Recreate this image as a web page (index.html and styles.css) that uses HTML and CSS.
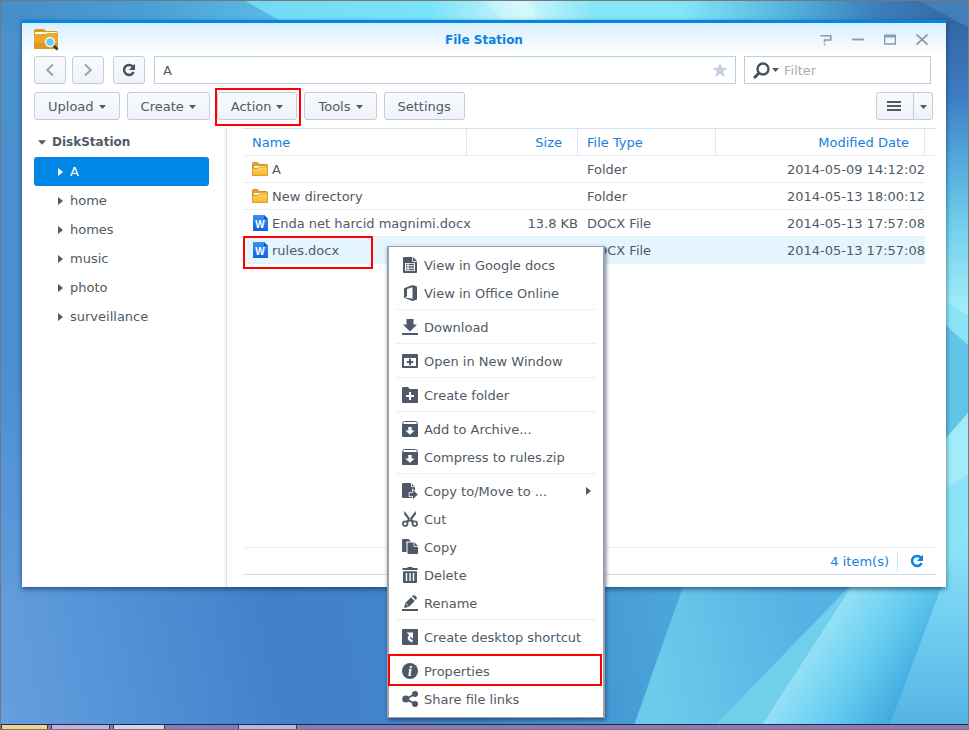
FILE: index.html
```html
<!DOCTYPE html>
<html lang="en">
<head>
<meta charset="utf-8">
<title>File Station</title>
<link rel="stylesheet" href="styles.css">
</head>
<body>
<svg class="defs" width="0" height="0" aria-hidden="true">
  <defs>
    <linearGradient id="gFolder" x1="0" y1="0" x2="0" y2="1"><stop offset="0" stop-color="#ffd766"/><stop offset="1" stop-color="#f5b52c"/></linearGradient>
    <linearGradient id="gWord" x1="0" y1="0" x2="0" y2="1"><stop offset="0" stop-color="#3a92f2"/><stop offset="1" stop-color="#1763d6"/></linearGradient>
  </defs>
  <symbol id="caret" viewBox="0 0 7 4"><path d="M0 0h7L3.500 4z" fill="currentColor"/></symbol>
  <symbol id="arrow" viewBox="0 0 5 8"><path d="M0 0v8L5 4z" fill="currentColor"/></symbol>
  <symbol id="reload" viewBox="0 0 14 14"><path d="M10.800 3.600A5 5 0 1 0 11.600 9" fill="none" stroke="currentColor" stroke-width="2.500"/><path d="M13 .8V7H6.800z" fill="currentColor"/></symbol>
  <symbol id="folder" viewBox="0 0 16 16"><path d="M.5 14V2.500q0-1 1-1h4l1.500 2h7.500q1 0 1 1V14z" fill="#e2a42c" stroke="#cf902a"/><path d="M2 5h12v3H2z" fill="#fff2c4"/><path d="M.5 14.500V7.500h5.500l1.500-1.500h8v8.500z" fill="url(#gFolder)" stroke="#dc9f2c"/></symbol>
</svg>

<div class="desktop">
  <svg class="wallpaper" viewBox="0 0 969 730" preserveAspectRatio="none" aria-hidden="true">
    <defs>
      <linearGradient id="wBase" gradientUnits="userSpaceOnUse" x1="0" y1="730" x2="690" y2="600"><stop offset="0" stop-color="#669edf"/><stop offset=".16" stop-color="#5594d7"/><stop offset=".42" stop-color="#427fca"/><stop offset=".7" stop-color="#4189cc"/><stop offset="1" stop-color="#4ca8dc"/></linearGradient>
      <linearGradient id="wLeft" x1="0" y1="0" x2="0" y2="1"><stop offset="0" stop-color="#4a92cd"/><stop offset=".6" stop-color="#4a8ed4"/><stop offset="1" stop-color="#5f9adb"/></linearGradient>
      <linearGradient id="wTop" gradientUnits="userSpaceOnUse" x1="0" y1="0" x2="969" y2="0"><stop offset="0" stop-color="#468dcc"/><stop offset=".15" stop-color="#4a9fd4"/><stop offset=".3" stop-color="#5dbfe7"/></linearGradient>
      <linearGradient id="wSky" gradientUnits="userSpaceOnUse" x1="250" y1="0" x2="969" y2="20"><stop offset="0" stop-color="#74d9f2"/><stop offset=".25" stop-color="#79e3f9"/><stop offset=".38" stop-color="#cdf7fd"/><stop offset=".48" stop-color="#84e5f7"/><stop offset=".6" stop-color="#83e6f7"/><stop offset=".75" stop-color="#53b3dc"/><stop offset=".87" stop-color="#3b7fbd"/><stop offset="1" stop-color="#3265a0"/></linearGradient>
      <linearGradient id="wRight" x1="0" y1="0" x2="0" y2="1"><stop offset="0" stop-color="#3366a4"/><stop offset=".25" stop-color="#3e7dc3"/><stop offset=".45" stop-color="#50a7da"/><stop offset=".7" stop-color="#74d2ed"/><stop offset="1" stop-color="#a8f0fa"/></linearGradient>
      <linearGradient id="wCyan" gradientUnits="userSpaceOnUse" x1="650" y1="650" x2="800" y2="620"><stop offset="0" stop-color="#6ccbea"/><stop offset="1" stop-color="#54b3e4"/></linearGradient>
      <linearGradient id="wBeam" gradientUnits="userSpaceOnUse" x1="800" y1="640" x2="905" y2="710"><stop offset="0" stop-color="#a3e6f7"/><stop offset=".5" stop-color="#6acff1"/><stop offset="1" stop-color="#3da7df"/></linearGradient>
      <linearGradient id="wEdge" x1="0" y1="0" x2="0" y2="1"><stop offset="0" stop-color="#8fe8fb"/><stop offset="1" stop-color="#53b2e5"/></linearGradient>
    </defs>
    <rect width="969" height="730" fill="url(#wBase)"/>
    <rect width="24" height="588" fill="url(#wLeft)"/>
    <rect width="400" height="30" fill="url(#wTop)"/>
    <path d="M245 0H969V40H315z" fill="url(#wSky)"/>
    <path d="M485 0H530L545 40H520z" fill="#fff" opacity=".2"/>
    <rect x="930" y="20" width="39" height="300" fill="url(#wRight)"/>
    <path d="M920 0H969V26z" fill="#417fba"/>
    <path d="M930 290l39 25v415H930z" fill="#8be4f5"/>
    <path d="M930 310l39 35v75l-39 45z" fill="#62c4e8"/>
    <path d="M930 458l39-45v62l-39 25z" fill="#a2ebf8"/>
    <path d="M686 580H857L716 730H633z" fill="url(#wCyan)"/>
    <path d="M857 580L712 730H764z" fill="#70d0ec"/>
    <path d="M857 580H946L969 523V730H760z" fill="url(#wBeam)"/>
    <path d="M969 523V730H889L945 580z" fill="url(#wEdge)"/>
  </svg>

  <main class="window">
    <header class="titlebar">
      <svg class="app-icon" viewBox="0 0 25 22" aria-hidden="true"><path d="M0 2q0-2 2-2h8l2 2h10q2 0 2 2v4H0z" fill="#d99a1c"/><path d="M1 3h22v5H1z" fill="#fff8e4"/><path d="M0 5h12l1-1h11v15q0 1-1 1H1q-1 0-1-1z" fill="#eaaa27"/><path d="M0 14h24v5q0 1-1 1H1q-1 0-1-1z" fill="#dc9920"/><path d="M19.500 16.500l4 4" stroke="#2c3c50" stroke-width="2.500"/><circle cx="16" cy="13" r="4.500" fill="#68ccf6" stroke="#f1f5f6" stroke-width="1.500"/></svg>
      <h1 class="title">File Station</h1>
      <div class="window-controls">
        <button type="button" aria-label="Help"><svg viewBox="0 0 12 12"><path d="M.5 1.800h10.300v4.200H4.500v2.200M4.500 9.500v1.800" fill="none" stroke="currentColor" stroke-width="1.600"/></svg></button>
        <button type="button" aria-label="Minimize"><svg viewBox="0 0 12 12"><path d="M0 5.500h12" stroke="currentColor" stroke-width="1.800"/></svg></button>
        <button type="button" aria-label="Maximize"><svg viewBox="0 0 12 12"><path d="M.7 1v9h10.600V1" fill="none" stroke="currentColor" stroke-width="1.400"/><path d="M0 .5h12v3H0z" fill="currentColor"/></svg></button>
        <button type="button" aria-label="Close"><svg viewBox="0 0 12 12"><path d="M.5 .5l11 10M11.500 .5L.5 10.500" stroke="currentColor" stroke-width="1.800"/></svg></button>
      </div>
    </header>

    <div class="navbar">
      <button type="button" class="btn square" aria-label="Back"><svg class="chev" viewBox="0 0 8 12"><path d="M7 .5L1.200 6 7 11.500" fill="none" stroke="currentColor" stroke-width="2"/></svg></button>
      <button type="button" class="btn square" aria-label="Forward"><svg class="chev" viewBox="0 0 8 12"><path d="M1 .5L6.800 6 1 11.500" fill="none" stroke="currentColor" stroke-width="2"/></svg></button>
      <button type="button" class="btn square refresh" aria-label="Refresh"><svg class="reload"><use href="#reload"/></svg></button>
      <div class="field path">
        <input type="text" value="A" aria-label="Path">
        <svg class="star" viewBox="0 0 16 16" aria-hidden="true"><path d="M8 .5l2 5.200 5.500.3-4.300 3.500 1.500 5.500L8 12l-4.700 3 1.500-5.500L.5 6 6 5.700z" fill="currentColor"/></svg>
      </div>
      <div class="field filter">
        <svg class="lens" viewBox="0 0 17 17" aria-hidden="true"><circle cx="10" cy="7" r="5.500" fill="none" stroke="currentColor" stroke-width="2.400"/><path d="M6 11l-5 5" stroke="currentColor" stroke-width="3"/></svg>
        <svg class="caret"><use href="#caret"/></svg>
        <input type="text" placeholder="Filter" aria-label="Filter">
      </div>
    </div>

    <div class="toolbar">
      <button type="button" class="btn">Upload <svg class="caret"><use href="#caret"/></svg></button>
      <button type="button" class="btn">Create <svg class="caret"><use href="#caret"/></svg></button>
      <button type="button" class="btn marked">Action <svg class="caret"><use href="#caret"/></svg></button>
      <button type="button" class="btn">Tools <svg class="caret"><use href="#caret"/></svg></button>
      <button type="button" class="btn">Settings</button>
      <div class="view-switch">
        <button type="button" class="btn" aria-label="List view"><svg class="bars" viewBox="0 0 14 10"><path d="M0 1h14M0 5h14M0 9h14" stroke="currentColor" stroke-width="2"/></svg></button>
        <button type="button" class="btn" aria-label="View options"><svg class="caret"><use href="#caret"/></svg></button>
      </div>
    </div>

    <div class="content">
      <nav class="sidebar">
        <a href="#" class="root"><svg class="root-caret"><use href="#caret"/></svg>DiskStation</a>
        <a href="#" class="node active"><svg class="arrow"><use href="#arrow"/></svg>A</a>
        <a href="#" class="node"><svg class="arrow"><use href="#arrow"/></svg>home</a>
        <a href="#" class="node"><svg class="arrow"><use href="#arrow"/></svg>homes</a>
        <a href="#" class="node"><svg class="arrow"><use href="#arrow"/></svg>music</a>
        <a href="#" class="node"><svg class="arrow"><use href="#arrow"/></svg>photo</a>
        <a href="#" class="node"><svg class="arrow"><use href="#arrow"/></svg>surveillance</a>
      </nav>
      <section class="files">
        <table>
          <colgroup><col><col class="c-size"><col class="c-type"><col class="c-date"><col class="c-end"></colgroup>
          <thead><tr><th>Name</th><th class="size">Size</th><th>File Type</th><th class="date">Modified Date</th><th class="end"></th></tr></thead>
          <tbody>
            <tr><td><span class="file"><svg><use href="#folder"/></svg>A</span></td><td class="size"></td><td>Folder</td><td class="date">2014-05-09 14:12:02</td><td class="end"></td></tr>
            <tr><td><span class="file"><svg><use href="#folder"/></svg>New directory</span></td><td class="size"></td><td>Folder</td><td class="date">2014-05-13 18:00:12</td><td class="end"></td></tr>
            <tr><td><span class="file"><svg viewBox="0 0 16 16"><path d="M1 0h11l4 4v12H1z" fill="url(#gWord)"/><path d="M12 0l4 4h-4z" fill="#1450a8"/><text x="8" y="13" text-anchor="middle" class="word-letter">W</text></svg>Enda net harcid magnimi.docx</span></td><td class="size">13.8 KB</td><td>DOCX File</td><td class="date">2014-05-13 17:57:08</td><td class="end"></td></tr>
            <tr class="selected"><td><span class="file marked"><svg viewBox="0 0 16 16"><path d="M1 0h11l4 4v12H1z" fill="url(#gWord)"/><path d="M12 0l4 4h-4z" fill="#1450a8"/><text x="8" y="13" text-anchor="middle" class="word-letter">W</text></svg>rules.docx</span></td><td class="size"></td><td>DOCX File</td><td class="date">2014-05-13 17:57:08</td><td class="end"></td></tr>
          </tbody>
        </table>
        <footer class="status"><span class="count">4 item(s)</span><button type="button" aria-label="Reload list"><svg class="reload"><use href="#reload"/></svg></button></footer>
      </section>
    </div>
  </main>

  <div class="menu">
    <button type="button"><svg viewBox="0 0 16 16"><path d="M1 1q0-1 1-1h9l4 4v11q0 1-1 1H2q-1 0-1-1z" fill="currentColor"/><path d="M10.500 0v4.500H15" fill="none" stroke="#fff" stroke-width=".8"/><path d="M3 6h10v8H3z" fill="#fff"/><path d="M4 7.500h1.500M6.500 7.500H12M4 10h1.500M6.500 10H12M4 12.500h1.500M6.500 12.500H12" stroke="currentColor" stroke-width="1.300"/></svg>View in Google docs</button>
    <button type="button"><svg viewBox="0 0 16 16"><path d="M10.500 0L15 1.500v13L10.500 16 2 12.800V3.200zM10.500 2.300L5 4v7.500l-2.300 1L10.500 13.700z" fill="currentColor" fill-rule="evenodd"/></svg>View in Office Online</button>
    <hr>
    <button type="button"><svg viewBox="0 0 16 16"><path d="M4.500 0h7v5.500H15L8 12.500 1 5.500h3.500zM0 14h16v2H0z" fill="currentColor"/></svg>Download</button>
    <hr>
    <button type="button"><svg viewBox="0 0 16 16"><path d="M1 1h14q1 0 1 1v12q0 1-1 1H1q-1 0-1-1V2q0-1 1-1zM2 5v8h12V5z" fill="currentColor" fill-rule="evenodd"/><path d="M8 5.800v6.400M4.800 9h6.400" stroke="currentColor" stroke-width="2"/></svg>Open in New Window</button>
    <hr>
    <button type="button"><svg viewBox="0 0 16 16"><path d="M0 1q0-1 1-1h5l1.500 2H15q1 0 1 1v12q0 1-1 1H1q-1 0-1-1z" fill="currentColor"/><path d="M8 5v8M4 9h8" stroke="#fff" stroke-width="2"/></svg>Create folder</button>
    <hr>
    <button type="button"><svg viewBox="0 0 16 16"><path d="M.5 3.500q0-3 2-3h11q2 0 2 3" fill="none" stroke="currentColor"/><path d="M0 4q0-1 1-1h14q1 0 1 1v11q0 1-1 1H1q-1 0-1-1z" fill="currentColor"/><path d="M6.300 6h3.400v3.500h3L8 13.800 3.300 9.500h3z" fill="#fff"/></svg>Add to Archive...</button>
    <button type="button"><svg viewBox="0 0 16 16"><path d="M.5 3.500q0-3 2-3h11q2 0 2 3" fill="none" stroke="currentColor"/><path d="M0 4q0-1 1-1h14q1 0 1 1v11q0 1-1 1H1q-1 0-1-1z" fill="currentColor"/><path d="M6.300 6h3.400v3.500h3L8 13.800 3.300 9.500h3z" fill="#fff"/></svg>Compress to rules.zip</button>
    <hr>
    <button type="button"><svg viewBox="0 0 16 16"><path d="M0 1q0-1 1-1h8l4 4v11H1q-1 0-1-1z" fill="currentColor"/><path d="M9.500 0v3.800H13" fill="none" stroke="#fff" stroke-width=".8"/><path d="M7.500 9.800H11V7l4.800 4.500L11 16v-2.800H7.500z" fill="#4f5868" stroke="#fff" stroke-width="1.600" paint-order="stroke"/></svg>Copy to/Move to ...<svg class="arrow sub"><use href="#arrow"/></svg></button>
    <button type="button"><svg viewBox="0 0 16 16"><path d="M2.500 0L9.500 9.500 8 11 2 3zM13.500 0L6.500 9.500 8 11l6-8z" fill="currentColor"/><path d="M7.500 8.500L5 11M8.500 8.500L11 11" stroke="currentColor" stroke-width="2.500"/><circle cx="3.200" cy="12.700" r="2.300" fill="none" stroke="currentColor" stroke-width="1.700"/><circle cx="12.800" cy="12.700" r="2.300" fill="none" stroke="currentColor" stroke-width="1.700"/></svg>Cut</button>
    <button type="button"><svg viewBox="0 0 16 16"><path d="M0 1q0-1 1-1h5.500L9 2.500H4.500V13H1q-1 0-1-1z" fill="currentColor"/><path d="M5.500 4.500q0-1 1-1h6L16 7v7q0 1-1 1H6.500q-1 0-1-1z" fill="currentColor"/><path d="M12 3.500v4h4" fill="none" stroke="#fff" stroke-width=".8"/></svg>Copy</button>
    <button type="button"><svg viewBox="0 0 16 16"><path d="M.5 1H5.500V0h5v1h5v2H.5zM1 4.200h14V15q0 1-1 1H2q-1 0-1-1z" fill="currentColor"/><path d="M4.500 6v8M8 6v8M11.500 6v8" stroke="#fff" stroke-width="1.400"/></svg>Delete</button>
    <button type="button"><svg viewBox="0 0 16 16"><path d="M2 13l1.300-5L9 2.300 12.700 6 7 11.700zM10 1.300q1.500-2 3.500-.3l.6.6q1.600 1.600-.3 3.400z" fill="currentColor"/><path d="M3.800 8.500L6.500 11.200" stroke="#fff" stroke-width=".8"/><path d="M0 14h16v2H0z" fill="currentColor"/></svg>Rename</button>
    <hr>
    <button type="button"><svg viewBox="0 0 16 16"><path d="M1 0h14q1 0 1 1v14q0 1-1 1H1q-1 0-1-1V1q0-1 1-1z" fill="currentColor"/><path d="M4.500 3.500H11V10z" fill="#fff"/><path d="M8.500 6q-4 4 2 6.500" fill="none" stroke="#fff" stroke-width="2.400"/></svg>Create desktop shortcut</button>
    <hr>
    <button type="button" class="marked"><svg viewBox="0 0 16 16"><circle cx="8" cy="8" r="8" fill="currentColor"/><text x="8" y="13" text-anchor="middle" class="info-letter">i</text></svg>Properties</button>
    <button type="button"><svg viewBox="0 0 16 16"><path d="M13 3L4 8l9 5" fill="none" stroke="currentColor" stroke-width="2"/><circle cx="3.800" cy="8" r="3.600" fill="currentColor"/><circle cx="13" cy="3" r="3" fill="currentColor"/><circle cx="13" cy="13" r="3" fill="currentColor"/></svg>Share file links</button>
  </div>

  <div class="taskbar" aria-hidden="true"><span class="tab gold"></span><span class="tab"></span><span class="tab pale"></span><span class="space"></span><span class="tab"></span></div>
</div>
</body>
</html>
```
FILE: styles.css
```css
* { box-sizing: border-box; }

body {
  margin: 0;
  color: #505a66;
  font: 13px/17px Verdana, "DejaVu Sans", sans-serif;
}

button, input { font: inherit; color: inherit; }
button { padding: 0; border: 0; background: none; }
a { color: inherit; text-decoration: none; }
svg { flex: none; }
.defs { position: absolute; }

.desktop {
  position: relative;
  display: flex;
  flex-direction: column;
  height: 100vh;
  border: 1px solid #777;
  overflow: hidden;
}

.wallpaper {
  position: absolute;
  inset: 0;
  width: 100%;
  height: 100%;
}

.window {
  position: relative;
  flex: 1;
  display: flex;
  flex-direction: column;
  min-height: 0;
  margin: 19px 22px 137px 21px;
  border-top: 3px solid #0086e5;
  background: #fff;
  box-shadow: 0 2px 5px rgba(10, 40, 80, .65);
}

.titlebar {
  display: grid;
  grid-template-columns: 1fr auto 1fr;
  align-items: center;
  height: 33px;
  padding: 0 12px;
  background: linear-gradient(#d8effe, #fff);
}
.app-icon { width: 25px; height: 22px; }
.title { margin: 0; color: #0a82e0; font-size: 12px; line-height: 16px; }
.window-controls { display: flex; justify-content: flex-end; gap: 20px; padding-right: 6px; color: #8d9aa9; }
.window-controls button, .window-controls svg { display: block; width: 12px; height: 12px; }

.navbar { display: flex; gap: 8px; padding: 0 15px 0 12px; }

.btn {
  position: relative;
  display: flex;
  align-items: center;
  justify-content: center;
  gap: 5px;
  height: 28px;
  padding: 0 13px;
  border: 1px solid #c3ccda;
  border-radius: 3px;
  background: linear-gradient(#f8fafd, #eff3f9);
}
.square { width: 32px; padding: 0; color: #98a4b3; }
.square + .square { margin-left: -2px; }
.square + .refresh { margin-left: 1px; color: #48525f; }
.chev { width: 8px; height: 12px; }
.reload { width: 14px; height: 14px; }
.refresh + .field { margin-left: 1px; }
.caret { width: 7px; height: 4px; margin-top: 2px; }

.field {
  display: flex;
  align-items: center;
  height: 28px;
  padding: 0 7px 0 8px;
  border: 1px solid #c3ccda;
  background: #fff;
}
.field input { flex: 1; min-width: 0; height: 17px; padding: 0; border: 0; outline: 0; background: none; }
.field input::placeholder { color: #a8aeb5; opacity: 1; }
.path { flex: 1; }
.star { width: 16px; height: 16px; color: #c5d0de; }
.filter { width: 187px; }
.lens { width: 17px; height: 17px; color: #48525f; }
.filter .caret { margin: 0 5px 0 2px; }

.toolbar { display: flex; gap: 7px; padding: 8px 13px 8px 12px; }
.view-switch { display: flex; margin-left: auto; }
.view-switch .btn:first-child { width: 38px; padding: 0 2px 0 0; border-radius: 3px 0 0 3px; }
.view-switch .btn:last-child { width: 20px; padding: 0; margin-left: -1px; border-radius: 0 3px 3px 0; }
.bars { width: 14px; height: 10px; }

.content { flex: 1; display: flex; min-height: 0; }

.sidebar {
  flex: none;
  width: 205px;
  padding: 0 17px 0 12px;
  border-right: 1px solid #d8dde7;
  box-shadow: inset -2px 0 #f6f7fa;
}
.root, .node { display: flex; align-items: center; height: 29px; border-radius: 3px; }
.root { gap: 6px; padding-left: 4px; font-size: 12px; font-weight: bold; }
.root-caret { width: 8px; height: 5px; }
.node { gap: 7px; padding-left: 24px; }
.node.active { background: #0086e5; color: #fff; }
.arrow { width: 5px; height: 8px; }

.files {
  flex: 1;
  display: flex;
  flex-direction: column;
  min-width: 0;
  margin: 0 10px 12px 16px;
  border-top: 1px solid #d3e1ec;
  border-bottom: 1px solid #cfe0ec;
}
table { width: 100%; border-collapse: separate; border-spacing: 0; table-layout: fixed; }
.c-size { width: 111px; }
.c-type { width: 138px; }
.c-date { width: 209px; }
.c-end { width: 11px; }
th, td {
  height: 27px;
  padding: 0 0 0 9px;
  border-bottom: 1px solid #e8eff2;
  text-align: left;
  font-weight: normal;
  white-space: nowrap;
}
th { color: #1680dd; border-right: 1px solid #e0e7f0; }
th:last-child { border-right: 0; }
.size, .date { text-align: right; }
th.size, th.date { padding-right: 15px; }
td.end { border-bottom: 0; }
.selected td:not(.end) { background: #e5f5fe; }
.file { position: relative; display: flex; align-items: center; gap: 4px; width: 120px; }
.file svg { width: 16px; height: 16px; }
.word-letter { fill: #fff; font: bold 10px "Liberation Sans", sans-serif; }

.status {
  display: flex;
  align-items: center;
  justify-content: flex-end;
  height: 27px;
  margin-top: auto;
  padding-right: 12px;
  border-top: 1px solid #ebeef1;
  color: #1680dd;
}
.count { margin-right: 8px; }
.status button { display: flex; align-items: center; height: 19px; padding-left: 12px; border-left: 1px solid #cfe0ec; color: #0086e5; }

.menu {
  position: absolute;
  top: 245px;
  left: 386px;
  width: 218px;
  padding: 4px 7px;
  border: solid #9ba2ad;
  border-width: 1px 2px;
  background: #fff;
  box-shadow: 1px 2px 4px rgba(20, 40, 70, .6);
}
.menu button {
  position: relative;
  display: flex;
  align-items: center;
  gap: 6px;
  width: 100%;
  height: 28px;
  padding: 0 5px 0 6px;
}
.menu svg { width: 16px; height: 16px; color: #4f5868; }
.menu .sub { width: 5px; height: 8px; margin-left: auto; }
.menu hr { height: 1px; margin: 2px 0 3px; border: 0; background: #ebf0f3; }
.info-letter { fill: #fff; font: italic bold 14px "Liberation Serif", serif; }

/* red callout frames */
.marked::after {
  content: "";
  position: absolute;
  inset: -5px -5px -7px -3px;
  border: 2px solid #f00;
  pointer-events: none;
}
.file.marked::after { inset: -6px -1px -10px -9px; }
.menu .marked::after { inset: -3px -6px -1px -8px; }

.taskbar {
  position: relative;
  display: flex;
  gap: 3px;
  height: 5px;
  border-top: 1px solid #222846;
  background: #9077b8;
}
.tab { width: 59px; border: 1px solid #3b3360; border-width: 0 1px; background: #c5b2dc; }
.tab.gold { width: 47px; background: #f4d387; }
.tab.pale { width: 52px; background: #ddd2eb; }
.space { width: 67px; }
```
